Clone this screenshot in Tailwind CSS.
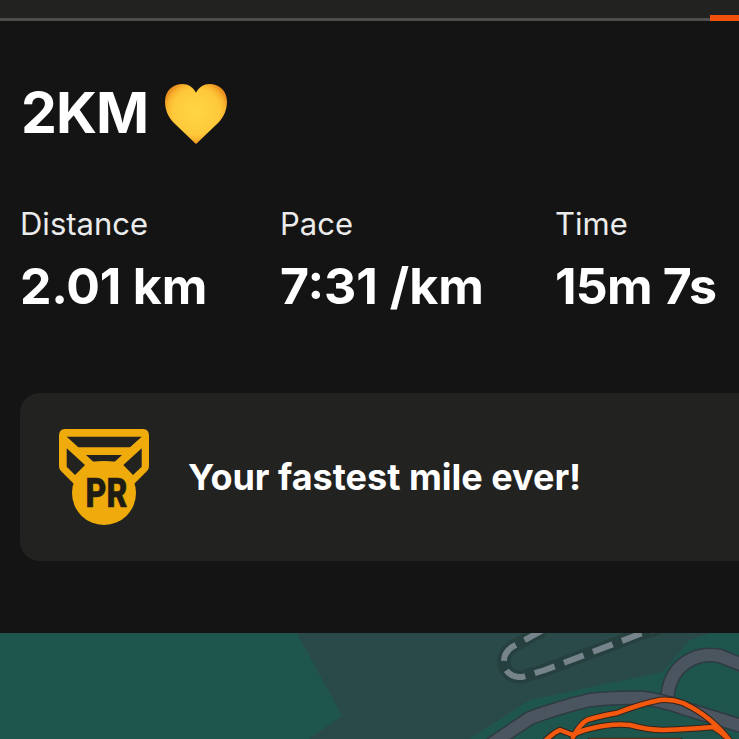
<!DOCTYPE html>
<html lang="en">
<head>
    <meta charset="UTF-8">
    <meta name="viewport" content="width=device-width, initial-scale=1.0">
    <title>2KM activity</title>
    <script src="https://cdn.jsdelivr.net/npm/@tailwindcss/browser@4"></script>
</head>
<body class="bg-[#141414] text-white font-['Inter',sans-serif] overflow-hidden">
    <div class="w-[739px] h-[739px] overflow-hidden flex flex-col">
        <!-- top bar and progress line -->
        <div class="relative h-[21px] shrink-0 bg-[#222220] border-b-[3px] border-[#4d4d4c]">
            <div class="absolute right-0 top-[15px] w-[29px] h-[6px] bg-[#f2500d]"></div>
        </div>

        <!-- title -->
        <div class="flex items-center h-[178px] shrink-0 pt-[4px] pl-[21px]">
            <h1 class="text-[57px] leading-none font-bold tracking-[-1px]">2KM</h1>
            <svg class="ml-[16px] mt-[3px]" width="64" height="62" viewBox="0 0 66 64">
                <defs>
                    <radialGradient id="heartFill" cx="50%" cy="46%" r="54%">
                        <stop offset="0%" stop-color="#ffd644"/>
                        <stop offset="70%" stop-color="#fec93a"/>
                        <stop offset="88%" stop-color="#f9b22e"/>
                        <stop offset="100%" stop-color="#e98f1f"/>
                    </radialGradient>
                </defs>
                <path d="M33 63 Q32 62 30 60 L10 41 C4 35 1 27 1 19 C1 8 9 1 19 1 C25 1 30 4 33 10 C36 4 41 1 47 1 C57 1 65 8 65 19 C65 27 62 35 56 41 L36 60 Q34 62 33 63 Z" fill="url(#heartFill)"/>
            </svg>
        </div>

        <!-- stats -->
        <div class="flex shrink-0 pt-[3px] pl-[20px] whitespace-nowrap">
            <div class="w-[260px]">
                <div class="text-[31px] leading-[44px] font-normal text-[#ebebeb]">Distance</div>
                <div class="text-[50px] leading-[60px] font-bold mt-[10px] tracking-[-0.2px]">2.01 km</div>
            </div>
            <div class="w-[275px]">
                <div class="text-[31px] leading-[44px] font-normal text-[#ebebeb]">Pace</div>
                <div class="text-[50px] leading-[60px] font-bold mt-[10px] tracking-[0px]">7:31 /km</div>
            </div>
            <div>
                <div class="text-[31px] leading-[44px] font-normal text-[#ebebeb]">Time</div>
                <div class="text-[50px] leading-[60px] font-bold mt-[10px] tracking-[-0.8px]">15m 7s</div>
            </div>
        </div>

        <!-- PR card -->
        <div class="flex items-center shrink-0 h-[168px] mt-[77px] ml-[20px] -mr-[20px] pl-[38px] bg-[#222220] rounded-[20px]">
            <svg width="92" height="97" viewBox="58 429 92 97" class="shrink-0">
                <path fill-rule="evenodd" fill="#efab0c" d="M65 429 H143 Q149 429 149 436 V466 Q149 469 147 471 L128 490 H80 L61 471 Q59 469 59 466 V436 Q59 429 65 429 Z M66.7 436.7 L78.3 447.3 H130 L141.7 436.7 Z M66.7 448.3 V466.7 L75 475 L85 465 Z M141.7 448.3 L123.3 465 L133 475 L141.7 466.7 Z M86 455 L93 461.5 H115 L122 455 Z"/>
                <circle cx="104" cy="493" r="32" fill="#efab0c"/>
                <text x="85.5" y="507" font-family="Roboto, sans-serif" font-weight="900" font-size="41" textLength="42" lengthAdjust="spacingAndGlyphs" fill="#1f1c14" stroke="#1f1c14" stroke-width="0.5">PR</text>
            </svg>
            <div class="ml-[38px] text-[36px] leading-none font-bold whitespace-nowrap">Your fastest mile ever!</div>
        </div>

        <!-- map -->
        <svg class="block mt-[72px] shrink-0" width="739" height="106" viewBox="0 633 739 106">
            <rect x="0" y="633" width="739" height="106" fill="#1e564e"/>
            <path d="M297 633 L342 716 L308 739 H470 L530 700 L663 672 L690 640 L710 633 Z" fill="#2a4a4a"/>
            <!-- dashed path -->
            <path d="M543 630 L512 647 Q503 653 504 664 Q506 677 522 677 L545 670 L640 634 L660 628" fill="none" stroke="#25403f" stroke-width="13" stroke-linejoin="round"/>
            <path d="M543 630 L512 647 Q503 653 504 664 Q506 677 522 677 L545 670 L640 634 L660 628" fill="none" stroke="#77838a" stroke-width="6" stroke-dasharray="21 10"/>
            <!-- roads -->
            <g fill="none" stroke-linejoin="round">
                <path d="M667 702 Q668 675 685 663 Q700 652 720 656 L745 666" stroke="#2f3a42" stroke-width="15"/>
                <path d="M667 702 Q668 675 685 663 Q700 652 720 656 L745 666" stroke="#4b5560" stroke-width="12"/>
                <path d="M490 745 L530 718 Q560 707 590 700 Q620 697 643 698 Q665 701 683 708 L745 727" stroke="#2f3a42" stroke-width="15"/>
                <path d="M490 745 L530 718 Q560 707 590 700 Q620 697 643 698 Q665 701 683 708 L745 727" stroke="#4b5560" stroke-width="12"/>
            </g>
            <!-- activity route -->
            <g fill="none" stroke-linejoin="round" stroke-linecap="round">
                <g stroke="#33231c" stroke-width="6.5">
                    <path d="M545 741 Q553 733 560 730 L573 735 Q582 730 593 728 Q612 723 630 725 Q648 730 663 730 Q690 729 713 727 Q722 732 730 741"/>
                    <path d="M573 737 Q580 724 587 720 Q600 716 617 713 Q640 704 660 700 Q672 699 683 703 Q698 710 710 720 Q722 730 730 741"/>
                    <path d="M590 741 H680"/>
                </g>
                <g stroke="#f2590f" stroke-width="4.5">
                    <path d="M545 741 Q553 733 560 730 L573 735 Q582 730 593 728 Q612 723 630 725 Q648 730 663 730 Q690 729 713 727 Q722 732 730 741"/>
                    <path d="M573 737 Q580 724 587 720 Q600 716 617 713 Q640 704 660 700 Q672 699 683 703 Q698 710 710 720 Q722 730 730 741"/>
                    <path d="M590 741 H680"/>
                </g>
            </g>
        </svg>
    </div>
</body>
</html>
